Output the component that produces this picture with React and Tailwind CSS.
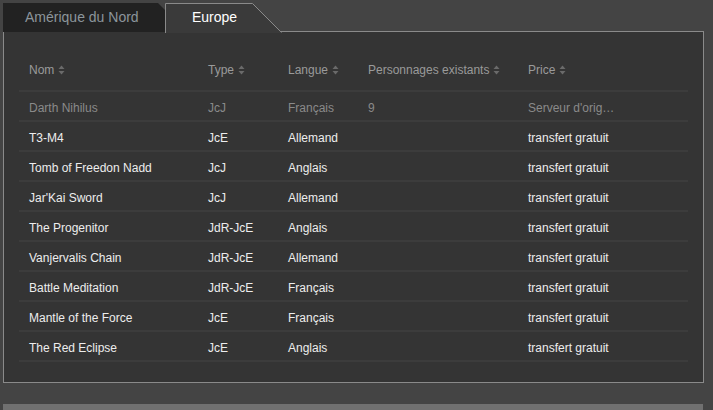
import React from "react";

const rows = [
  ["T3-M4", "JcE", "Allemand", "", "transfert gratuit"],
  ["Tomb of Freedon Nadd", "JcJ", "Anglais", "", "transfert gratuit"],
  ["Jar'Kai Sword", "JcJ", "Allemand", "", "transfert gratuit"],
  ["The Progenitor", "JdR-JcE", "Anglais", "", "transfert gratuit"],
  ["Vanjervalis Chain", "JdR-JcE", "Allemand", "", "transfert gratuit"],
  ["Battle Meditation", "JdR-JcE", "Français", "", "transfert gratuit"],
  ["Mantle of the Force", "JcE", "Français", "", "transfert gratuit"],
  ["The Red Eclipse", "JcE", "Anglais", "", "transfert gratuit"],
];

function Sort() {
  return (
    <svg width="7" height="10" viewBox="0 0 7 10" className="ml-[4px]">
      <path d="M3.5 0.5 L6.5 4 L0.5 4 Z" fill="#6a6a6a" />
      <path d="M3.5 9.5 L6.5 6 L0.5 6 Z" fill="#6a6a6a" />
    </svg>
  );
}

const grid = "grid grid-cols-[179px_80px_80px_160px_1fr]";

function Row({ cells, dim }) {
  return (
    <div className={`${grid} h-[30px] pt-[3px] items-center border-b-2 border-[#3c3c3c] ${dim ? "text-[#8a8a8a]" : "text-[#ededed]"}`}>
      {cells.map((c, i) => (
        <div key={i} className="pl-[10px] whitespace-nowrap">{c}</div>
      ))}
    </div>
  );
}

export default function App() {
  return (
    <div
      className="w-[713px] h-[410px] bg-[#444444] overflow-hidden flex flex-col"
      style={{ fontFamily: '"Liberation Sans", Arial, sans-serif' }}
    >
      <div className="pl-[3px] pt-[3px] pr-[9px]">
        <div className="flex h-[29px] relative z-10 -mb-px">
          <div
            className="w-[172px] h-[29px] bg-[#222222] text-[#8c959b] text-[14px] flex items-center pl-[22px] pb-[1px] -mr-[10px]"
            style={{ clipPath: "polygon(0 0, 155px 0, 172px 17px, 172px 100%, 0 100%)" }}
          >
            Amérique du Nord
          </div>
          <div className="relative w-[117px] h-[30px] text-white text-[14px] flex items-center pl-[27px] pb-[1px]">
            <svg className="absolute left-0 top-0" width="117" height="30" viewBox="0 0 117 30">
              <path d="M0.5 30 L0.5 0.5 L87.5 0.5 L116.5 29.5 L117 30 Z" fill="#3a3a3a" />
              <path d="M0.5 30 L0.5 0.5 L87.5 0.5 L116.5 29.5" fill="none" stroke="#8a8a8a" strokeWidth="1" />
            </svg>
            <span className="relative">Europe</span>
          </div>
        </div>
        <div className="bg-[#343434] border border-[#8a8a8a] h-[352px] px-[15px] pt-[15px] text-[12px]">
          <div className={`${grid} h-[45px] pt-[2px] items-center border-b-2 border-[#3c3c3c] text-[#9a9a9a]`}>
            {["Nom", "Type", "Langue", "Personnages existants", "Price"].map((h) => (
              <div key={h} className="pl-[10px] flex items-center whitespace-nowrap">
                {h}
                <Sort />
              </div>
            ))}
          </div>
          <Row cells={["Darth Nihilus", "JcJ", "Français", "9", "Serveur d'orig…"]} dim />
          {rows.map((r) => (
            <Row key={r[0]} cells={r} />
          ))}
        </div>
      </div>
      <div className="mt-auto ml-[3px] w-[700px] h-[6px] bg-[#707070]" />
    </div>
  );
}
